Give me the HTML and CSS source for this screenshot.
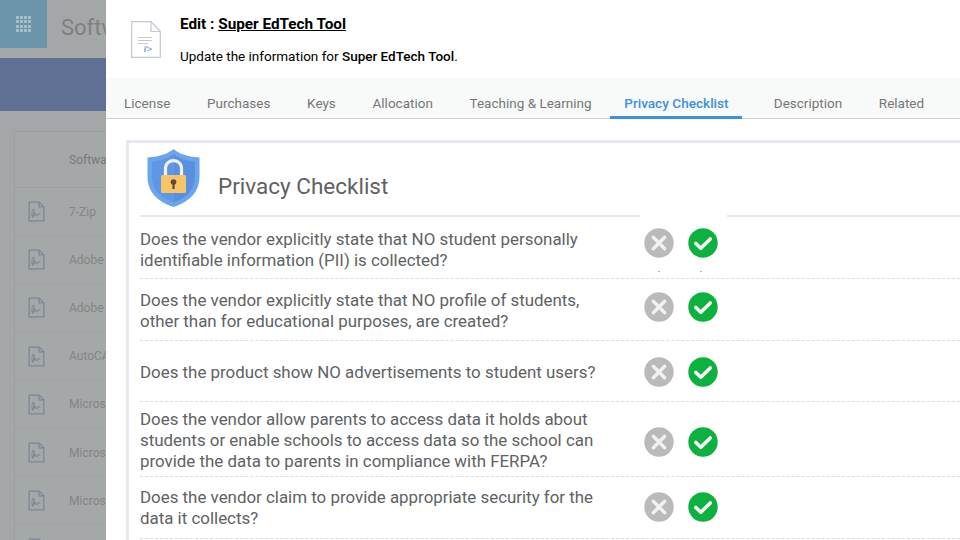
FILE: index.html
```html
<!DOCTYPE html>
<html lang="en">
<head>
<meta charset="utf-8">
<title>Edit Super EdTech Tool</title>
<link rel="stylesheet" href="styles.css">
</head>
<body>
<svg class="defs" width="0" height="0" aria-hidden="true">
  <symbol id="file-sig" viewBox="0 0 16 20">
    <path d="M1 1h9.500l4.500 4.500V19H1z M10.500 1v4.500H15" fill="none" stroke="currentColor" stroke-width="1.200"/>
    <path d="M4.300 15.500c-1-2.500-.8-7 .6-7.500 1.400-.4 1.200 4-.5 7.500 .8-.8 1.500-3 2.200-3.800.6 1 .8 2.300 1.400 2.400.6 0 1.200-2 1.800-2.200.5 .3 1 .8 2 .8" fill="none" stroke="currentColor" stroke-width="1"/>
  </symbol>
  <symbol id="no" viewBox="0 0 30 30">
    <circle cx="15" cy="15" r="14.700" fill="#bababa"/>
    <path d="M9.300 9.300l11.400 11.400M20.700 9.300 9.300 20.700" stroke="#f1f1f1" stroke-width="3.400" stroke-linecap="round"/>
  </symbol>
  <symbol id="yes" viewBox="0 0 30 30">
    <circle cx="15" cy="15" r="14.700" fill="#0cb13f"/>
    <path d="M7.800 15.400l5 4.800 9.500-9.300" fill="none" stroke="#fff" stroke-width="3.500" stroke-linecap="round" stroke-linejoin="round"/>
  </symbol>
</svg>

<div class="page">
  <header class="topbar">
    <div class="tile">
      <span class="dots"><i></i><i></i><i></i><i></i><i></i><i></i><i></i><i></i><i></i><i></i><i></i><i></i><i></i><i></i><i></i><i></i></span>
    </div>
    <div class="app-title">Software</div>
  </header>
  <div class="band"></div>
  <section class="list">
    <div class="list-head">Software</div>
    <div class="list-row"><svg class="row-icon"><use href="#file-sig"/></svg><span>7-Zip</span></div>
    <div class="list-row"><svg class="row-icon"><use href="#file-sig"/></svg><span>Adobe</span></div>
    <div class="list-row"><svg class="row-icon"><use href="#file-sig"/></svg><span>Adobe</span></div>
    <div class="list-row"><svg class="row-icon"><use href="#file-sig"/></svg><span>AutoCAD</span></div>
    <div class="list-row"><svg class="row-icon"><use href="#file-sig"/></svg><span>Microsoft</span></div>
    <div class="list-row"><svg class="row-icon"><use href="#file-sig"/></svg><span>Microsoft</span></div>
    <div class="list-row"><svg class="row-icon"><use href="#file-sig"/></svg><span>Microsoft</span></div>
    <div class="list-row"><svg class="row-icon"><use href="#file-sig"/></svg></div>
  </section>
</div>

<aside class="drawer">
  <div class="drawer-head">
    <svg class="doc-icon" viewBox="0 0 30 37">
      <path d="M.700.700h19.300l9.300 9.800v25.800H.700z" fill="#fff" stroke="#c3c8d0" stroke-width="1.200"/>
      <path d="M20 .700v9.800h9.300" fill="none" stroke="#c3c8d0" stroke-width="1.200"/>
      <path d="M7 16.500h14M7 19.500h14M7 22.500h10" stroke="#c6c9cd" stroke-width="1"/>
      <path d="M14 31c-.6-2.200-.2-5.600.7-5.600.9 0-.2 3.500-.9 5.600m1.500-5.200 5.700 2.500-5 1.500" fill="none" stroke="#8fa9d6" stroke-width="1"/>
    </svg>
    <div class="head-text">
      <h1>Edit : <u>Super EdTech Tool</u></h1>
      <p>Update the information for <b>Super EdTech Tool</b>.</p>
    </div>
  </div>

  <nav class="tabs">
    <a class="tab">License</a>
    <a class="tab">Purchases</a>
    <a class="tab">Keys</a>
    <a class="tab">Allocation</a>
    <a class="tab">Teaching &amp; Learning</a>
    <a class="tab active">Privacy Checklist</a>
    <a class="tab">Description</a>
    <a class="tab">Related</a>
  </nav>

  <section class="card">
    <div class="card-title">
      <svg class="shield" viewBox="0 0 53 58">
        <path d="M26.500 0c5 4.500 12.500 7.500 26 8.500V28c0 14-9 24.500-26 30C9.500 52.500.500 42 .500 28V8.500C14 7.500 21.500 4.500 26.500 0z" fill="#6aa5ee"/>
        <path d="M26.500 5c4.800 3.800 11.500 6.500 21.500 7.500V28c0 11.500-7.500 20.500-21.500 25.500z" fill="#5a8fdf"/>
        <path d="M26.500 5C21.700 8.800 15 11.500 5 12.500V28c0 11.500 7.500 20.500 21.500 25.500z" fill="#5f97e6"/>
        <path d="M18.500 27v-7.500c0-10.500 16-10.500 16 0V27" fill="none" stroke="#eef2f8" stroke-width="3.200"/>
        <rect x="14" y="26" width="25" height="18" rx="1.500" fill="#f7c467"/>
        <circle cx="26.500" cy="33" r="2.800" fill="#5b4a3a"/>
        <rect x="25.400" y="34" width="2.200" height="6" fill="#5b4a3a"/>
      </svg>
      <h2>Privacy Checklist</h2>
    </div>
    <div class="rule"><span class="rule-line"></span><span class="rule-gap"></span><span class="rule-line grow"></span></div>

    <div class="q q-1">
      <p>Does the vendor explicitly state that NO student personally<br>identifiable information (PII) is collected?</p>
      <div class="answers"><svg class="answer"><use href="#no"/></svg><svg class="answer"><use href="#yes"/></svg></div>
    </div>
    <div class="q q-2">
      <p>Does the vendor explicitly state that NO profile of students,<br>other than for educational purposes, are created?</p>
      <div class="answers"><svg class="answer"><use href="#no"/></svg><svg class="answer"><use href="#yes"/></svg></div>
    </div>
    <div class="q q-3">
      <p>Does the product show NO advertisements to student users?</p>
      <div class="answers"><svg class="answer"><use href="#no"/></svg><svg class="answer"><use href="#yes"/></svg></div>
    </div>
    <div class="q q-4">
      <p>Does the vendor allow parents to access data it holds about<br>students or enable schools to access data so the school can<br>provide the data to parents in compliance with FERPA?</p>
      <div class="answers"><svg class="answer"><use href="#no"/></svg><svg class="answer"><use href="#yes"/></svg></div>
    </div>
    <div class="q q-5">
      <p>Does the vendor claim to provide appropriate security for the<br>data it collects?</p>
      <div class="answers"><svg class="answer"><use href="#no"/></svg><svg class="answer"><use href="#yes"/></svg></div>
    </div>
  </section>
</aside>
</body>
</html>
```

FILE: styles.css
```css
* { box-sizing: border-box; }

html, body {
  margin: 0;
  height: 540px;
  overflow: hidden;
  font-family: Roboto, "Liberation Sans", sans-serif;
}

body { position: relative; background: #a4a7a7; }

.defs { position: absolute; }

/* dimmed page behind the drawer */
.page { height: 540px; overflow: hidden; color: #7d8080; }

.topbar { display: flex; align-items: center; height: 58px; }

.tile {
  width: 47px;
  height: 48px;
  align-self: flex-start;
  background: #6c95ac;
  display: flex;
  align-items: center;
  justify-content: center;
}

.dots {
  display: grid;
  grid-template-columns: repeat(4, 3px);
  grid-auto-rows: 3px;
  gap: 1.330px;
}
.dots i { background: #a9bdc9; }

.app-title { margin: -4px 0 0 14px; font-size: 22px; color: #7d8080; white-space: nowrap; }

.band { height: 53px; background: #5f7094; }

.list {
  margin: 20px 0 0 14px;
  border: 1px solid #9c9f9f;
  border-right: 0;
  background: #a5a8a8;
}

.list-head {
  height: 56px;
  padding-left: 54px;
  display: flex;
  align-items: center;
  font-size: 12px;
  color: #777a7a;
  border-bottom: 1px solid #9e9f9f;
}

.list-row {
  height: 48.200px;
  display: flex;
  align-items: center;
  padding-left: 13px;
  font-size: 12px;
  color: #828585;
  border-bottom: 1px solid #a1a4a4;
  white-space: nowrap;
}

.row-icon { width: 17px; height: 21px; margin-right: 24px; color: #7b8794; flex: none; }

/* drawer */
.drawer {
  position: absolute;
  left: 106px;
  top: 0;
  width: 854px;
  height: 540px;
  background: #fff;
  overflow: hidden;
}

.drawer-head { height: 78px; display: flex; padding: 21px 0 0 25px; }

.doc-icon { width: 30px; height: 37px; flex: none; }

.head-text { margin-left: 19px; margin-top: -6px; color: #000; }

.head-text h1 { margin: 0; font-size: 15.300px; line-height: 19px; font-weight: 700; }
.head-text p { margin: 13px 0 0; font-size: 13.500px; line-height: 18px; }
.head-text b { font-weight: 500; }

.tabs {
  height: 41px;
  padding-left: 4px;
  display: flex;
  gap: 9.700px;
  background: #f8f9f9;
  border-bottom: 1px solid #cdd0d2;
}

.tab {
  padding: 17px 13px 0 14px;
  height: 41px;
  font-size: 13.500px;
  line-height: 16px;
  color: #777;
  white-space: nowrap;
}

.tab.active {
  margin: 0 8.500px 0 -4px;
  color: #3c8fe3;
  font-size: 13.600px;
  font-weight: 500;
  border-bottom: 3px solid #3c8fe3;
}

.card {
  margin: 21px -20px 0 20px;
  border: 3px solid #e8e8f0;
  border-right: 0;
  border-bottom: 0;
  padding-left: 11px;
  height: 420px;
}

.card-title { height: 72px; display: flex; padding: 6px 0 0 7px; }

.shield { width: 53px; height: 58px; flex: none; }

.card-title h2 {
  margin: 24px 0 0 18px;
  font-size: 22.500px;
  line-height: 27px;
  font-weight: 400;
  color: #5f6163;
}

.rule { display: flex; height: 2px; }
.rule-line { width: 500px; background: #e8e8ec; }
.rule-gap { width: 87px; }
.rule-line.grow { flex: 1; }

.q {
  display: flex;
  align-items: center;
  border-bottom: 1px dashed #dcdcdc;
}

.q-1 { height: 62px; position: relative; }
.q-2 { height: 62px; }
.q-3 { height: 61px; }
.q-4 { height: 75px; }
.q-5 { height: 62px; }

.q p {
  width: 504px;
  margin: 0;
  font-size: 16.900px;
  line-height: 21px;
  color: #606264;
  white-space: nowrap;
}

.q-1 p { margin-top: 5px; }
.q-2 p { margin-top: 3px; }
.q-3 p { margin-top: 2px; }
.q-4 p { margin-top: 2px; }
.q-5 p { margin-top: 1px; }

.answers { display: flex; gap: 14px; flex: none; }
.answer { width: 30px; height: 30px; }

.q-1 .answers { margin-top: -9px; }
.q-2 .answers { margin-top: -5px; }
.q-3 .answers { margin-top: 2px; }
.q-4 .answers { margin-top: 6px; }
.q-5 .answers { margin-top: -2px; }

/* faint marks under the first row's answers */
.q-1::after {
  content: "";
  position: absolute;
  left: 518px;
  top: 54px;
  width: 44px;
  height: 1px;
  background: linear-gradient(90deg, #9fb8d2 2px, transparent 2px, transparent 42px, #9fb8d2 42px);
}
```
